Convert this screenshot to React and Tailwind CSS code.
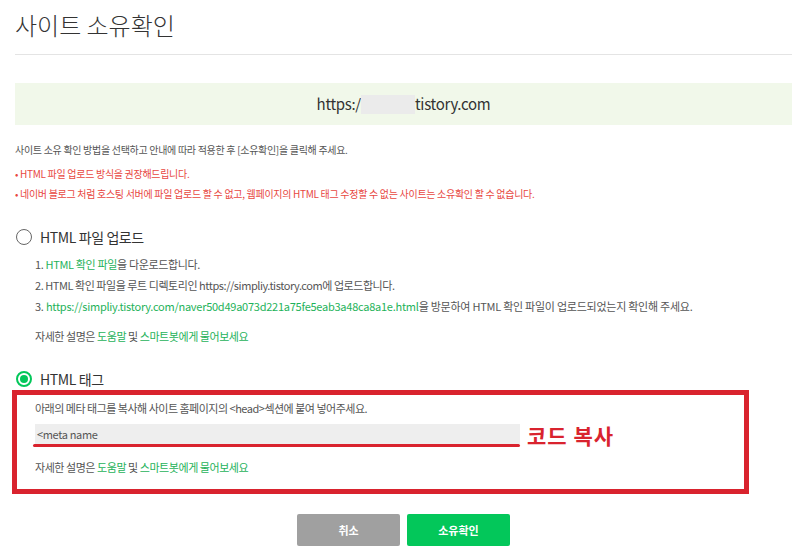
import React from 'react';

const GREEN = 'text-[#1eb25a]';

const Radio = ({ checked, label }) => (
  <div className="flex items-center gap-[8px] ml-[1px] h-[20px]">
    {checked ? (
      <span className="w-[16px] h-[16px] rounded-full border-2 border-[#03c75a] flex items-center justify-center">
        <span className="w-[8px] h-[8px] rounded-full bg-[#03c75a]" />
      </span>
    ) : (
      <span className="w-[16px] h-[16px] rounded-full border border-[#666]" />
    )}
    <span className="text-[14px] leading-[20px] tracking-[-0.4px] text-[#333]">{label}</span>
  </div>
);

const HelpLine = ({ className = '' }) => (
  <p className={`text-[11px] leading-[20px] tracking-[-0.45px] text-[#555] ${className}`}>
    자세한 설명은 <span className={GREEN}>도움말</span> 및{' '}
    <span className={GREEN}>스마트봇에게 물어보세요</span>
  </p>
);

export default function App() {
  return (
    <div
      className="w-[800px] h-[557px] bg-white overflow-hidden"
      style={{ fontFamily: '"Noto Sans CJK KR", "Noto Sans", sans-serif' }}
    >
      <div className="pl-[15px] pr-[8px]">
        {/* 제목 */}
        <h1 className="pt-[9px] text-[24px] leading-[32px] font-light text-[#333]">사이트 소유확인</h1>
        <div className="mt-[13px] h-px bg-[#e4e4e4]" />

        {/* 사이트 주소 */}
        <div className="mt-[28px] h-[42px] bg-[#f1f8ea] flex items-center justify-center text-[15px] tracking-[-0.3px] text-[#333]">
          <span>https:/</span>
          <span className="inline-block w-[54px] h-[19px] bg-[#ebebeb]" />
          <span>tistory.com</span>
        </div>

        {/* 안내 */}
        <p className="mt-[15px] text-[10px] leading-[20px] tracking-[-0.3px] text-[#555]">
          사이트 소유 확인 방법을 선택하고 안내에 따라 적용한 후 [소유확인]을 클릭해 주세요.
        </p>
        <p className="mt-[4px] text-[10px] leading-[20px] tracking-[-0.3px] text-[#e8473f]">• HTML 파일 업로드 방식을 권장해드립니다.</p>
        <p className="text-[10px] leading-[20px] tracking-[-0.3px] text-[#e8473f]">
          • 네이버 블로그 처럼 호스팅 서버에 파일 업로드 할 수 없고, 웹페이지의 HTML 태그 수정할 수 없는 사이트는 소유확인 할 수 없습니다.
        </p>

        {/* HTML 파일 업로드 */}
        <div className="mt-[23px]">
          <Radio label="HTML 파일 업로드" />
        </div>
        <ol className="mt-[7px] pl-[20px] text-[11px] leading-[21px] tracking-[-0.35px] text-[#555]">
          <li>
            1. <span className={GREEN}>HTML 확인 파일</span>을 다운로드합니다.
          </li>
          <li className="tracking-[-0.45px]">2. HTML 확인 파일을 루트 디렉토리인 https://simpliy.tistory.com에 업로드합니다.</li>
          <li className="tracking-[-0.25px]">
            3. <span className={GREEN}>https://simpliy.tistory.com/naver50d49a073d221a75fe5eab3a48ca8a1e.html</span>을
            방문하여 HTML 확인 파일이 업로드되었는지 확인해 주세요.
          </li>
        </ol>
        <HelpLine className="mt-[9px] pl-[20px]" />

        {/* HTML 태그 */}
        <div className="mt-[23px]">
          <Radio checked label="HTML 태그" />
        </div>
        <div className="mt-px -ml-[3px] w-[737px] border-[5px] border-[#d9232e] pl-[18px] pt-[3px] pb-[12px]">
          <p className="text-[11px] leading-[20px] tracking-[-0.5px] text-[#555]">
            아래의 메타 태그를 복사해 사이트 홈페이지의 &lt;head&gt;섹션에 붙여 넣어주세요.
          </p>
          <div className="mt-[5px] flex items-center">
            <div className="w-[485px]">
              <div className="h-[20px] bg-[#eeeeee] pl-[2px] text-[11px] leading-[20px] tracking-[-0.35px] text-[#555]">&lt;meta name</div>
              <div className="-ml-[2px] w-[487px] h-[3px] rounded-full bg-[#d9232e]" />
            </div>
            <span className="ml-[7px] text-[21px] leading-[24px] font-bold tracking-[1px] text-[#d9232e]">코드 복사</span>
          </div>
          <HelpLine className="mt-[10px]" />
        </div>

        {/* 버튼 */}
        <div className="mt-[20px] flex justify-center gap-[7px]">
          <button className="w-[103px] h-[32px] rounded-[2px] bg-[#a0a0a0] text-white text-[11px] font-bold">취소</button>
          <button className="w-[103px] h-[32px] rounded-[2px] bg-[#03c75a] text-white text-[11px] font-bold">소유확인</button>
        </div>
      </div>
    </div>
  );
}
